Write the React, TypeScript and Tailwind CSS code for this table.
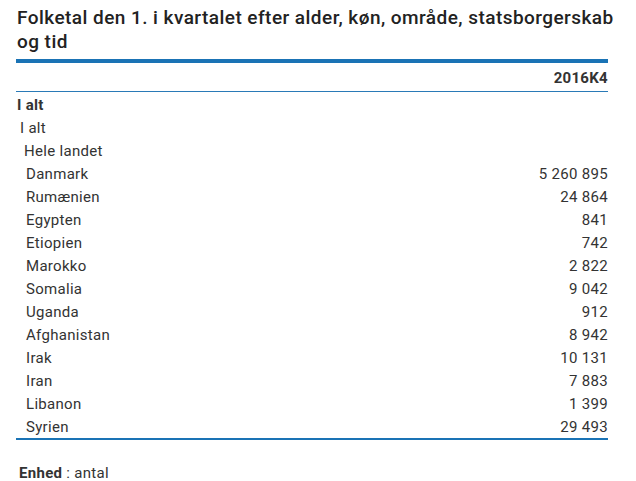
const rows: { label: string; indent: string; value?: string; bold?: boolean }[] = [
  { label: "I alt", indent: "pl-[1px]", bold: true },
  { label: "I alt", indent: "pl-[4px]" },
  { label: "Hele landet", indent: "pl-[8px]" },
  { label: "Danmark", indent: "pl-[10px]", value: "5 260 895" },
  { label: "Rumænien", indent: "pl-[10px]", value: "24 864" },
  { label: "Egypten", indent: "pl-[10px]", value: "841" },
  { label: "Etiopien", indent: "pl-[10px]", value: "742" },
  { label: "Marokko", indent: "pl-[10px]", value: "2 822" },
  { label: "Somalia", indent: "pl-[10px]", value: "9 042" },
  { label: "Uganda", indent: "pl-[10px]", value: "912" },
  { label: "Afghanistan", indent: "pl-[10px]", value: "8 942" },
  { label: "Irak", indent: "pl-[10px]", value: "10 131" },
  { label: "Iran", indent: "pl-[10px]", value: "7 883" },
  { label: "Libanon", indent: "pl-[10px]", value: "1 399" },
  { label: "Syrien", indent: "pl-[10px]", value: "29 493" },
]

export default function App() {
  return (
    <div className="h-[481px] w-[636px] overflow-hidden bg-white px-4 font-['Roboto',sans-serif] text-[#333]">
      <div className="w-[592px]">
        <h1 className="pt-[6px] pl-[1px] text-[19px] leading-[24px] font-medium tracking-[0.45px] text-[#222]">
          <span className="whitespace-nowrap">Folketal den 1. i kvartalet efter alder, køn, område, statsborgerskab</span>
          <br />
          og tid
        </h1>
        <div className="mt-[5px] h-[4px] bg-[#1a73b5]" />
        <div className="flex h-[28px] items-center justify-end pt-[2px] text-[15px] font-bold tracking-[0.3px]">
          2016K4
        </div>
        <div className="h-px bg-[#2a7ab7]" />
        <div className="mt-[2px] text-[15px] tracking-[0.3px]">
          {rows.map((r, i) => (
            <div key={i} className="flex h-[23px] items-center justify-between">
              <span className={`${r.indent} ${r.bold ? "font-bold" : ""}`}>{r.label}</span>
              {r.value && <span>{r.value}</span>}
            </div>
          ))}
        </div>
        <div className="-mt-[1px] h-[2px] bg-[#1a73b5]" />
        <div className="mt-[26px] pl-[3px] text-[15px] leading-[14px] tracking-[0.3px]">
          <span className="font-bold">Enhed</span> : antal
        </div>
      </div>
    </div>
  )
}
